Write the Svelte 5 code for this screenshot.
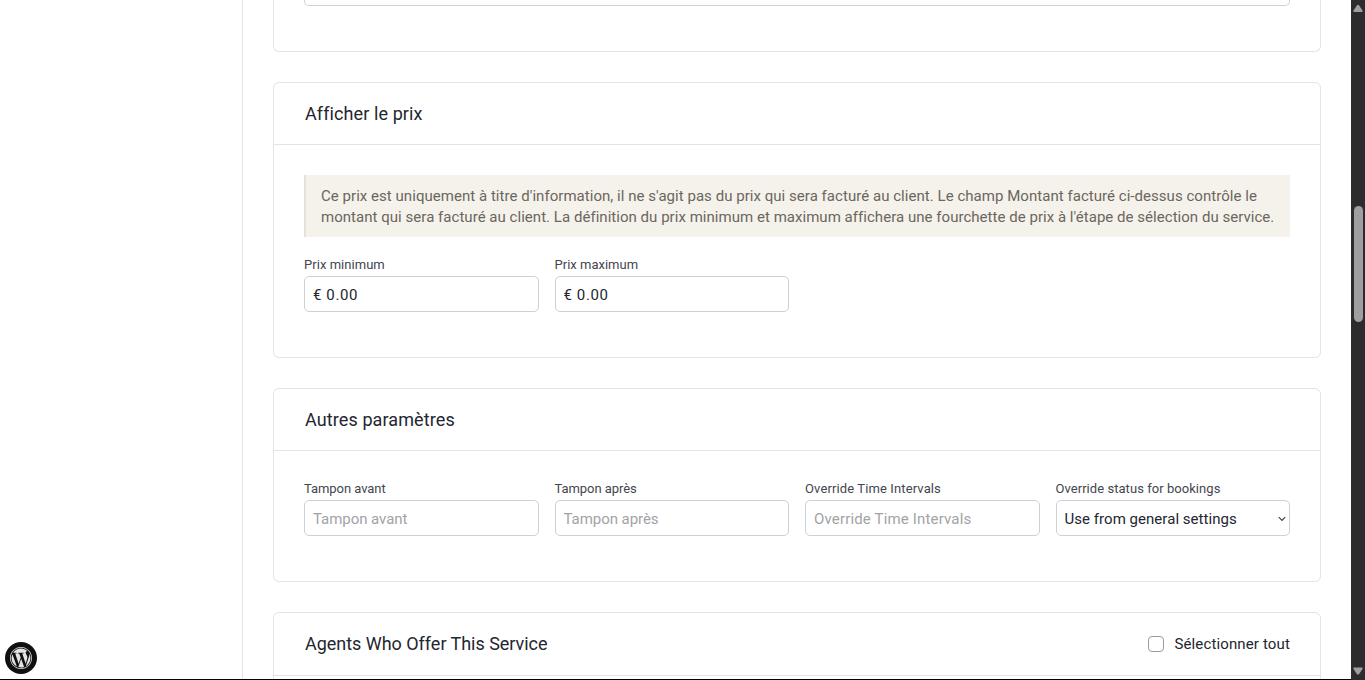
<script>
  const priceFields = [
    { label: 'Prix minimum', track: 0.04 },
    { label: 'Prix maximum', track: 0.01 }
  ];
  const bufferFields = [
    { label: 'Tampon avant', track: -0.06, inner: -0.05 },
    { label: 'Tampon après', track: -0.06, inner: -0.05 },
    { label: 'Override Time Intervals', track: 0.12, inner: 0.16 }
  ];
</script>

<div class="page">
  <aside class="side">
    <div class="wp" aria-label="WordPress">
      <svg width="22" height="22" viewBox="0 0 122.5 122.5" fill="#e4e4e4">
        <path d="M8.7 61.3c0 20.8 12.1 38.7 29.6 47.3L13.300 39.900c-2.900 6.500-4.600 13.700-4.600 21.400zM96.700 58.600c0-6.500-2.300-11-4.300-14.500-2.700-4.300-5.200-8-5.200-12.300 0-4.800 3.700-9.300 8.900-9.300h.7c-9.400-8.600-22-13.900-35.800-13.900-18.400 0-34.500 9.400-43.900 23.700 1.200 0 2.400.1 3.400.1 5.500 0 14-.7 14-.7 2.900-.2 3.200 4 .4 4.300 0 0-2.900.3-6 .5l19.100 57 11.500-34.500-8.200-22.500c-2.800-.2-5.500-.5-5.500-.5-2.800-.2-2.500-4.500.3-4.300 0 0 8.700.7 13.900.7 5.500 0 14-.7 14-.7 2.800-.2 3.200 4 .3 4.300 0 0-2.800.3-6 .5l19 56.500 5.200-17.500c2.700-7.200 4.200-12.400 4.200-16.900zM62.200 65.900L46.400 111.800c4.700 1.400 9.700 2.100 14.800 2.100 6.100 0 12-1.100 17.400-3zM107.400 36c.2 1.700.4 3.500.4 5.400 0 5.300-1 11.300-4 18.800l-16.100 46.500c15.600-9.100 26.200-26 26.200-45.400 0-9.200-2.400-17.800-6.500-25.300z" />
        <path d="M61.300 0C27.500 0 0 27.500 0 61.300s27.500 61.200 61.300 61.200 61.200-27.500 61.200-61.200S95 0 61.300 0zm0 118.500C29.700 118.500 4 92.800 4 61.300S29.700 4 61.300 4s57.200 25.700 57.200 57.300-25.700 57.200-57.200 57.200z" />
      </svg>
    </div>
  </aside>

  <main>
    <section class="card first"><div class="area"></div></section>

    <section class="card price">
      <header><h3>Afficher le prix</h3></header>
      <div class="body">
        <div class="note">
          <span class="line1">Ce prix est uniquement à titre d'information, il ne s'agit pas du prix qui sera facturé au client. Le champ Montant facturé ci-dessus contrôle le</span>
          <span class="line2">montant qui sera facturé au client. La définition du prix minimum et maximum affichera une fourchette de prix à l'étape de sélection du service.</span>
        </div>
        <div class="grid">
          {#each priceFields as f}
            <label><span class="label" style:letter-spacing="{f.track}px">{f.label}</span><input class="money" type="text" value="€ 0.00" /></label>
          {/each}
        </div>
      </div>
    </section>

    <section class="card other">
      <header><h3>Autres paramètres</h3></header>
      <div class="body">
        <div class="grid">
          {#each bufferFields as f}
            <label><span class="label" style:letter-spacing="{f.track}px">{f.label}</span><input type="text" placeholder={f.label} style:letter-spacing="{f.inner}px" /></label>
          {/each}
          <label>
            <span class="label">Override status for bookings</span>
            <span class="select">
              <span>Use from general settings</span>
              <svg width="8" height="6" viewBox="0 0 8 6" fill="none" stroke="#444" stroke-width="1.200"><path d="M.8 1.200 4 4.400 7.200 1.200" /></svg>
            </span>
          </label>
        </div>
      </div>
    </section>

    <section class="card agents">
      <header>
        <h3 class="t-agents">Agents Who Offer This Service</h3>
        <div class="all"><i class="box"></i><span>Sélectionner tout</span></div>
      </header>
    </section>
  </main>

  <div class="scroll">
    <svg width="10" height="8" viewBox="0 0 10 8"><path d="M4.200 1h1.600L9.500 6.500V8h-9V6.500z" fill="#9f9f9f" /></svg>
    <div class="track"><div class="thumb"></div></div>
    <svg width="10" height="8" viewBox="0 0 10 8"><path d="M4.200 7.500h1.600L9.500 2V.500h-9V2z" fill="#9f9f9f" /></svg>
  </div>
  <div class="edge"></div>
</div>

<style>
  :global(body) { margin: 0; overflow: hidden; background: #fff; }
  .page {
    position: relative;
    display: flex;
    height: 680px;
    overflow: hidden;
    box-sizing: border-box;
    font-family: Roboto, "Liberation Sans", sans-serif;
    color: #23262f;
  }
  .page * { box-sizing: border-box; }
  .side {
    width: 243px;
    flex: none;
    border-right: 1px solid #e3e4e6;
    display: flex;
    align-items: flex-end;
    padding: 0 0 6px 5px;
  }
  .wp {
    width: 32px;
    height: 32px;
    border-radius: 50%;
    background: #101010;
    display: flex;
    align-items: center;
    justify-content: center;
  }
  main {
    flex: 1;
    min-width: 0;
    padding: 0 30px;
    display: flex;
    flex-direction: column;
    gap: 30px;
  }
  .card { flex: none; border: 1px solid #e3e4e6; border-radius: 6px; background: #fff; }
  .first { height: 52px; border-top: 0; border-radius: 0 0 6px 6px; padding: 0 30px; }
  .area { height: 6px; border: 1px solid #ced0d4; border-top: 0; border-radius: 0 0 5px 5px; }
  .price { height: 276px; }
  .other { height: 194px; }
  .agents { height: 120px; }
  header {
    height: 62px;
    border-bottom: 1px solid #e3e4e6;
    padding: 0 30px 0 31px;
    display: flex;
    align-items: center;
    justify-content: space-between;
  }
  .agents header { height: 63px; }
  h3 { margin: 0; font-size: 18px; font-weight: 400; line-height: 24px; letter-spacing: 0.1px; white-space: nowrap; }
  .t-agents { letter-spacing: -0.03px; }
  .body { padding: 30px; }
  .note {
    height: 62px;
    margin-bottom: 20px;
    border-left: 2px solid #e6e2d8;
    background: #f5f2eb;
    padding: 11px 0 0 15px;
    color: #6b665e;
    font-size: 15px;
    line-height: 21px;
    white-space: nowrap;
  }
  .note span { display: block; }
  .line1 { letter-spacing: 0.04px; }
  .line2 { letter-spacing: 0.034px; }
  .grid { display: grid; grid-template-columns: repeat(4, 1fr); gap: 16px; }
  label { display: flex; flex-direction: column; min-width: 0; }
  .label { font-size: 13px; line-height: 16px; height: 19px; color: #43464f; letter-spacing: 0.05px; white-space: nowrap; }
  input, .select {
    width: 100%;
    height: 36px;
    border: 1px solid #ced0d4;
    border-radius: 5px;
    background: #fff;
    padding: 1px 8px 0;
    font: 400 15px Roboto, "Liberation Sans", sans-serif;
    color: #23262f;
    outline: 0;
  }
  .money { letter-spacing: 0.6px; }
  input::placeholder { color: #a2a3a6; opacity: 1; }
  .select {
    display: flex;
    align-items: center;
    justify-content: space-between;
    border-color: #ced0dc;
    padding-right: 3px;
    letter-spacing: 0.04px;
    white-space: nowrap;
  }
  .all { display: flex; align-items: center; gap: 10px; font-size: 15px; letter-spacing: 0.14px; white-space: nowrap; }
  .box { width: 16px; height: 16px; border: 1px solid #9a9ba0; border-radius: 4px; }
  .scroll {
    width: 14px;
    flex: none;
    background: #2c2c2c;
    display: flex;
    flex-direction: column;
    align-items: center;
    padding: 4px 0 5px;
  }
  .track { flex: 1; padding-top: 194px; }
  .thumb { width: 9px; height: 116px; border-radius: 5px; background: #9f9f9f; }
  .edge { position: absolute; left: 0; right: 14px; bottom: 0; height: 1px; background: #000; }
</style>
